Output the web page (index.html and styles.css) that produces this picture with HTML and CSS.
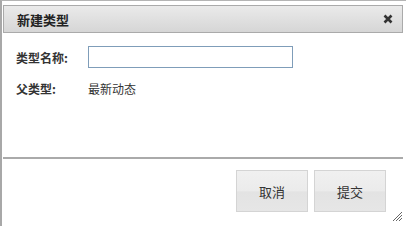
FILE: index.html
```html
<!DOCTYPE html>
<html lang="zh-CN">
<head>
    <meta charset="UTF-8">
    <title>新建类型</title>
    <link rel="stylesheet" href="styles.css">
</head>
<body>
    <div class="dialog">
        <div class="titlebar">
            <span class="title">新建类型</span>
            <svg class="close" width="10" height="10" viewBox="0 0 10 10">
                <path d="M1.5 1.5 L8.5 8.5 M8.5 1.5 L1.5 8.5" stroke="#333" stroke-width="2.6"/>
            </svg>
        </div>
        <div class="form">
            <div class="row">
                <label class="label" for="typeName">类型名称:</label>
                <input class="field" type="text" id="typeName" autofocus>
            </div>
            <div class="row">
                <span class="label">父类型:</span>
                <span class="value">最新动态</span>
            </div>
        </div>
        <div class="footer">
            <button class="btn">取消</button>
            <button class="btn">提交</button>
        </div>
        <svg class="grip" width="11" height="11" viewBox="0 0 11 11">
            <path d="M10 1 L1 10 M10 4 L4 10 M10 7 L7 10" stroke="#666" stroke-width="1"/>
        </svg>
    </div>
</body>
</html>
```

FILE: styles.css
```css
body {
    margin: 0;
    background: #ffffff;
    font-family: "Noto Sans CJK SC", "Liberation Sans", sans-serif;
    font-size: 12px;
    color: #333333;
}
.dialog {
    position: relative;
    height: 226px;
    border-top: 1px solid #b4b4b4;
    border-left: 2px solid #a8a8a8;
    padding: 4px 3px 0 1px;
    box-sizing: border-box;
}
.titlebar {
    height: 28px;
    border: 1px solid #aaaaaa;
    background: linear-gradient(#eaeaea, #d6d6d6);
    display: flex;
    align-items: center;
    justify-content: space-between;
    padding: 0 9px 0 13px;
    box-sizing: border-box;
}
.title {
    font-size: 13px;
    font-weight: bold;
    color: #222222;
}
.form {
    padding: 13px 0 0 13px;
    height: 126px;
    box-sizing: border-box;
    border-bottom: 2px solid #aaaaaa;
}
.row {
    display: flex;
    align-items: center;
    height: 22px;
    margin-bottom: 9px;
}
.label {
    width: 72px;
    font-weight: bold;
    color: #333333;
}
.field {
    width: 205px;
    height: 22px;
    box-sizing: border-box;
    border: 1px solid #7f9db9;
    margin: 0;
    padding: 0 3px;
    font-size: 12px;
    outline: none;
    caret-color: #000000;
}
.value {
    color: #333333;
}
.footer {
    display: flex;
    justify-content: flex-end;
    gap: 6px;
    padding: 11px 17px 0 0;
}
.btn {
    width: 72px;
    height: 42px;
    border: 1px solid #d4d4d4;
    background: linear-gradient(#f0f0f0 0%, #ebebeb 50%, #e3e3e3 52%, #e6e6e6 100%);
    font-family: "Noto Sans CJK SC", "Liberation Sans", sans-serif;
    font-size: 13px;
    color: #333333;
    padding: 0;
    cursor: pointer;
}
.grip {
    position: absolute;
    right: 3px;
    bottom: 4px;
}
```
